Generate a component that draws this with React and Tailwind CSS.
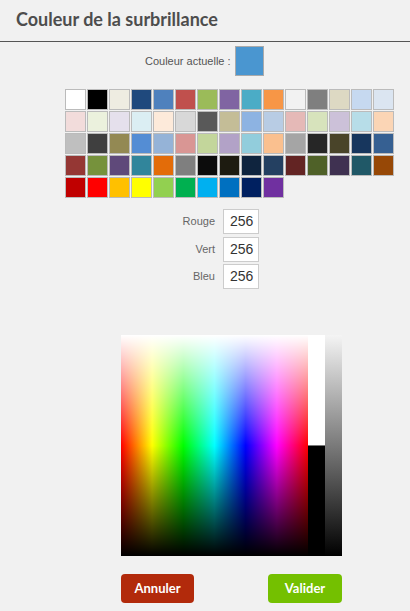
import React from "react";

const rows = [
  ["#ffffff","#000000","#eeece1","#1f497d","#4f81bd","#c0504d","#9bbb59","#8064a2","#4bacc6","#f79646","#f2f2f2","#7f7f7f","#ddd9c3","#c6d9f0","#dbe5f1"],
  ["#f2dcdb","#ebf1dd","#e5e0ec","#dbeef3","#fdeada","#d8d8d8","#595959","#c4bd97","#8db3e2","#b8cce4","#e5b9b7","#d7e3bc","#ccc1d9","#b7dde8","#fbd5b5"],
  ["#bfbfbf","#3f3f3f","#938953","#548dd4","#95b3d7","#d99694","#c3d69b","#b2a2c7","#92cddc","#fac08f","#a5a5a5","#262626","#494429","#17365d","#366092"],
  ["#953734","#76923c","#5f497a","#31859b","#e36c09","#7f7f7f","#0c0c0c","#1d1b10","#0f243e","#244061","#632423","#4f6128","#3f3151","#205867","#974806"],
  ["#c00000","#ff0000","#ffc000","#ffff00","#92d050","#00b050","#00b0f0","#0070c0","#002060","#7030a0"],
];

export default function App() {
  const colors = rows.flat();
  return (
    <div className="w-[410px] h-[611px] bg-[#f1f1f1] overflow-hidden font-['Liberation_Sans',Arial,sans-serif]">
      <div className="h-[42px] border-b border-[#555] pl-[16px] pt-[7px]">
        <h1 className="font-['Lato','Open_Sans',sans-serif] font-bold text-[18px] leading-[24px] text-[#4d4d4d]">
          Couleur de la surbrillance
        </h1>
      </div>

      <div className="flex items-center pl-[145px] mt-[4px] gap-[4px]">
        <span className="text-[11px] text-[#555]">Couleur actuelle :</span>
        <div className="w-[29px] h-[30px] bg-[#4a96d0] border border-[#aaa]" />
      </div>

      <div className="ml-[65px] mt-[13px] grid grid-cols-[repeat(15,21px)] gap-[1px]">
        {colors.map((c, i) => (
          <div key={i} className="w-[21px] h-[21px] border border-[#bbb]" style={{ backgroundColor: c }} />
        ))}
      </div>

      <div className="mt-[11px] flex flex-col gap-[2.5px] pl-[160px]">
        {["Rouge", "Vert", "Bleu"].map((l) => (
          <div key={l} className="flex items-center gap-[8px]">
            <span className="w-[55px] text-right text-[11px] text-[#666]">{l}</span>
            <div className="w-[36px] h-[25px] bg-white border border-[#ccc] text-[14px] text-[#333] pl-[6px] flex items-center">
              256
            </div>
          </div>
        ))}
      </div>

      <div className="ml-[121px] mt-[46px] flex h-[221px] w-[221px]">
        <div className="w-[187px] h-full bg-[linear-gradient(to_right,#ff0000,#ffff00,#00ff00,#00ffff,#0000ff,#ff00ff,#ff0000)]">
          <div className="w-full h-full bg-[linear-gradient(to_bottom,#ffffff,rgba(255,255,255,0)_50%,rgba(0,0,0,0)_50%,#000000)]" />
        </div>
        <div className="w-[17px] h-full flex flex-col">
          <div className="h-[110px] bg-white" />
          <div className="flex-1 bg-black border-t border-[#777]" />
        </div>
        <div className="w-[17px] h-full bg-[linear-gradient(to_bottom,#f4f4f4,#000000)]" />
      </div>

      <div className="ml-[121px] mt-[18px] w-[221px] flex justify-between font-['Lato','Open_Sans',sans-serif]">
        <button className="w-[73px] h-[29px] rounded-[4px] bg-[#b22a0b] text-white font-bold text-[13px]">Annuler</button>
        <button className="w-[74px] h-[29px] rounded-[4px] bg-[#74c000] text-white font-bold text-[13px]">Valider</button>
      </div>
    </div>
  );
}
